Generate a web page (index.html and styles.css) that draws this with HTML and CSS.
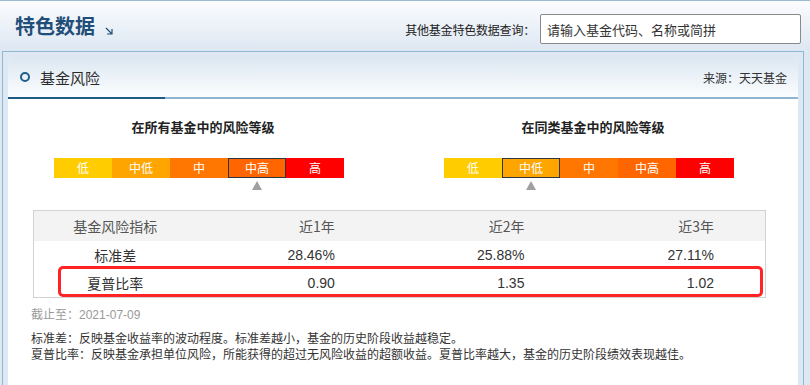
FILE: index.html
```html
<!DOCTYPE html>
<html lang="zh-CN">
<head>
    <meta charset="UTF-8">
    <title>特色数据 - 基金风险</title>
    <link rel="stylesheet" href="styles.css">
</head>
<body>
    <header class="top">
        <h1 class="title">特色数据
            <svg class="more" width="8" height="8" viewBox="0 0 8 8"><path d="M1 1L6.5 6.5M2 7H7V2" fill="none" stroke="#1f4e79" stroke-width="1.2"/></svg>
        </h1>
        <div class="search">
            <label for="fundSearch">其他基金特色数据查询：</label>
            <input type="text" id="fundSearch" placeholder="请输入基金代码、名称或简拼">
        </div>
    </header>

    <div class="box">
        <div class="panel">
            <div class="panel-head">
                <span class="ring"></span>
                <h2>基金风险</h2>
                <span class="source">来源：天天基金</span>
            </div>

            <div class="levels">
                <div class="level">
                    <h3>在所有基金中的风险等级</h3>
                    <div class="scale">
                        <span class="seg low">低</span>
                        <span class="seg midlow">中低</span>
                        <span class="seg mid">中</span>
                        <span class="seg midhigh current">中高</span>
                        <span class="seg high">高</span>
                    </div>
                    <div class="pointer">
                        <span></span><span></span><span></span><span><i class="arrow"></i></span><span></span>
                    </div>
                </div>
                <div class="level">
                    <h3>在同类基金中的风险等级</h3>
                    <div class="scale">
                        <span class="seg low">低</span>
                        <span class="seg midlow current">中低</span>
                        <span class="seg mid">中</span>
                        <span class="seg midhigh">中高</span>
                        <span class="seg high">高</span>
                    </div>
                    <div class="pointer">
                        <span></span><span><i class="arrow"></i></span><span></span><span></span><span></span>
                    </div>
                </div>
            </div>

            <div class="table-wrap">
                <table class="risk-table">
                    <thead>
                        <tr>
                            <th>基金风险指标</th>
                            <th>近1年</th>
                            <th>近2年</th>
                            <th>近3年</th>
                        </tr>
                    </thead>
                    <tbody>
                        <tr>
                            <td>标准差</td>
                            <td>28.46%</td>
                            <td>25.88%</td>
                            <td>27.11%</td>
                        </tr>
                        <tr>
                            <td>夏普比率</td>
                            <td>0.90</td>
                            <td>1.35</td>
                            <td>1.02</td>
                        </tr>
                    </tbody>
                </table>
                <!-- red highlight drawn over the sharpe row -->
                <div class="mark"></div>
            </div>

            <p class="date">截止至：<span>2021-07-09</span></p>
            <p class="note">标准差：反映基金收益率的波动程度。标准差越小，基金的历史阶段收益越稳定。</p>
            <p class="note">夏普比率：反映基金承担单位风险，所能获得的超过无风险收益的超额收益。夏普比率越大，基金的历史阶段绩效表现越佳。</p>
        </div>
    </div>
</body>
</html>
```

FILE: styles.css
```css
body {
    margin: 0;
    padding: 0;
    background-color: #dde8f3;
    font-family: "Noto Sans CJK SC", "Liberation Sans", sans-serif;
    font-size: 12px;
    color: #333;
    overflow: hidden;
}
.top {
    height: 50px;
    border-top: 1px solid #9cb8cf;
    background: linear-gradient(#fbfcfe, #dde7f2);
    display: flex;
    align-items: center;
    justify-content: space-between;
    padding: 0 9px 0 15px;
}
.title {
    margin: 0;
    font-size: 20px;
    line-height: 24px;
    font-weight: bold;
    color: #1f4e79;
    display: flex;
    align-items: flex-end;
}
.more {
    margin: 0 0 3px 10px;
}
.search {
    display: flex;
    align-items: center;
    padding-top: 6px;
}
.search label {
    font-size: 12px;
    color: #222;
    letter-spacing: -0.2px;
    margin-right: 5px;
}
.search input {
    width: 253px;
    height: 28px;
    border: 1px solid #8a8a8a;
    border-radius: 2px;
    padding: 0 0 0 6px;
    font-family: inherit;
    font-size: 13px;
    outline: none;
}
.search input::placeholder {
    color: #333;
}
.box {
    margin-left: 2px;
    width: 790px;
    border: 1px solid #8fb7d4;
    border-bottom: none;
    padding: 5px 5px 0 5px;
    height: 328px;
}
.panel {
    background-color: #fff;
    height: 100%;
    border-radius: 5px 5px 0 0;
}
.panel-head {
    height: 40px;
    display: flex;
    align-items: center;
    padding: 0 11px 0 12px;
    border-radius: 5px 5px 0 0;
    background: linear-gradient(#dce7f2, #fbfdfe);
    border-bottom: 2px solid #8db5d1;
    position: relative;
}
.panel-head::after {
    content: "";
    position: absolute;
    left: 0;
    bottom: -2px;
    width: 157px;
    height: 2px;
    background-color: #1c5a84;
}
.ring {
    width: 6px;
    height: 6px;
    border: 2px solid #1f5f8a;
    border-radius: 50%;
    margin-right: 10px;
}
.panel-head h2 {
    margin: 0;
    font-size: 15px;
    font-weight: normal;
    color: #2a2a2a;
    flex: 1;
}
.source {
    font-size: 12px;
    color: #333;
}
.levels {
    display: flex;
    gap: 100px;
    padding: 20px 0 0 46px;
}
.level h3 {
    margin: 0 0 23px;
    padding-left: 8px;
    font-size: 13px;
    line-height: 16px;
    text-align: center;
    color: #222;
}
.scale {
    display: flex;
}
.seg {
    width: 58px;
    height: 20px;
    line-height: 20px;
    text-align: center;
    color: #fff;
    font-size: 12px;
}
.low { background-color: #ffcc00; }
.midlow { background-color: #ffa500; }
.mid { background-color: #ff7700; }
.midhigh { background-color: #ff6600; }
.high { background-color: #ff0000; }
.seg.current {
    box-shadow: inset 0 0 0 1px #2f3640;
}
.pointer {
    display: flex;
    margin-top: 3px;
    height: 9px;
}
.pointer span {
    width: 58px;
    display: flex;
    justify-content: center;
}
.arrow {
    width: 0;
    height: 0;
    border-left: 5.5px solid transparent;
    border-right: 5.5px solid transparent;
    border-bottom: 9px solid #a0a0a0;
}
.table-wrap {
    position: relative;
    margin: 20px 0 0 25px;
    width: 733px;
}
.risk-table {
    width: 733px;
    border-collapse: collapse;
    border: 1px solid #d2d2d2;
    font-size: 14px;
}
.risk-table th {
    background-color: #f3f3f3;
    height: 30px;
    font-weight: normal;
    color: #555;
    text-align: right;
    padding: 0 51px 0 0;
    width: 139px;
}
.risk-table td {
    height: 28px;
    text-align: right;
    padding: 0 51px 0 0;
    font-family: "Liberation Sans", "Noto Sans CJK SC", sans-serif;
    color: #333;
}
.risk-table th:first-child,
.risk-table td:first-child {
    text-align: center;
    padding: 0;
    width: 163px;
    font-family: "Noto Sans CJK SC", sans-serif;
}
.mark {
    position: absolute;
    left: 25px;
    top: 56px;
    width: 699px;
    height: 25px;
    border: 3px solid #ff2323;
    border-radius: 5px;
}
.date {
    margin: 8px 0 0 23px;
    line-height: 16px;
    color: #999;
}
.date span {
    font-family: "Liberation Sans", sans-serif;
    color: #999;
}
.note {
    margin: 0 0 0 23px;
    line-height: 16px;
    color: #333;
}
.date + .note {
    margin-top: 7px;
}
```
